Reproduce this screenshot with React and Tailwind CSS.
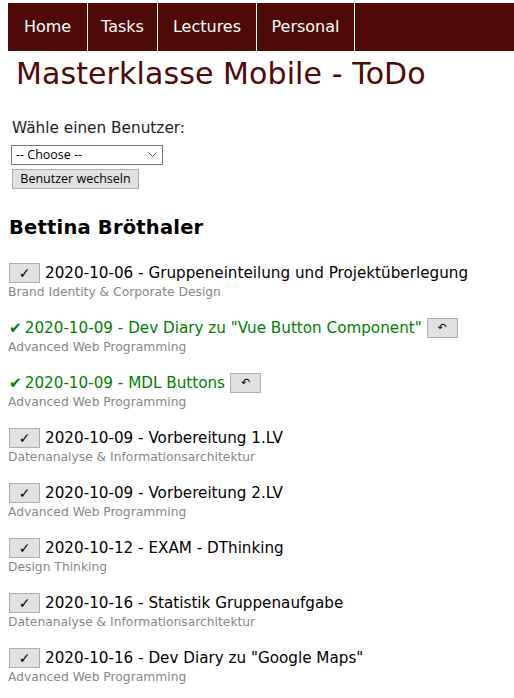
import React from "react";

const items = [
  { date: "2020-10-06", title: "Gruppeneinteilung und Projektüberlegung", course: "Brand Identity & Corporate Design", done: false },
  { date: "2020-10-09", title: 'Dev Diary zu "Vue Button Component"', course: "Advanced Web Programming", done: true },
  { date: "2020-10-09", title: "MDL Buttons", course: "Advanced Web Programming", done: true },
  { date: "2020-10-09", title: "Vorbereitung 1.LV", course: "Datenanalyse & Informationsarchitektur", done: false },
  { date: "2020-10-09", title: "Vorbereitung 2.LV", course: "Advanced Web Programming", done: false },
  { date: "2020-10-12", title: "EXAM - DThinking", course: "Design Thinking", done: false },
  { date: "2020-10-16", title: "Statistik Gruppenaufgabe", course: "Datenanalyse & Informationsarchitektur", done: false },
  { date: "2020-10-16", title: 'Dev Diary zu "Google Maps"', course: "Advanced Web Programming", done: false },
];

const font = { fontFamily: '"DejaVu Sans", sans-serif' };
const ui = { fontFamily: '"Open Sans", "Liberation Sans", sans-serif' };

export default function App() {
  return (
    <div className="bg-white min-h-[698px] pt-[3px] pl-[8px]" style={font}>
      <nav className="flex h-[48px] bg-[#4f0a07] text-white text-[16px]">
        {["Home", "Tasks", "Lectures", "Personal"].map((n, i) => (
          <div key={n} className={"flex items-center justify-center border-r border-white " + ["w-[80px]", "w-[70px]", "w-[99px]", "w-[98px]"][i]}>
            {n}
          </div>
        ))}
        <div className="flex-1" />
      </nav>
      <h1 className="text-[30px] leading-[40px] text-[#4f0a07] pl-[8px] mt-[3px] tracking-[0.1px]">Masterklasse Mobile - ToDo</h1>
      <div className="mt-[24px] pl-[4px] text-[15.3px] leading-[20px] text-[#222]">Wähle einen Benutzer:</div>
      <div className="mt-[7px] pl-[3px]">
        <div className="w-[152px] h-[20px] border border-[#767676] flex items-center justify-between pl-[4px] pr-[5px] text-[12.5px] text-black" style={ui}>
          <span>-- Choose --</span>
          <svg width="9" height="6" viewBox="0 0 9 6"><path d="M0.5 0.5 L4.5 4.5 L8.5 0.5" fill="none" stroke="#555" strokeWidth="1" /></svg>
        </div>
      </div>
      <div className="mt-[4px] pl-[4px]">
        <div className="w-[127px] h-[20px] bg-[#e1e1e1] border border-[#adadad] flex items-center justify-center text-[12.5px] text-black" style={ui}>
          Benutzer wechseln
        </div>
      </div>
      <h2 className="mt-[25px] pl-[1px] text-[19.5px] leading-[28px] font-bold text-black tracking-[0.2px]">Bettina Bröthaler</h2>
      <div className="mt-[20px] pl-[1px]">
        {items.map((it, i) => (
          <div key={i} className="mb-[17px]">
            <div className="h-[22px] flex items-center text-[15.2px]">
              {it.done ? (
                <>
                  <span className="text-[#008000] font-bold mr-[3px]">✔</span>
                  <span className="text-[#008000]">{it.date} - {it.title}</span>
                  <span className="ml-[5px] w-[31px] h-[20px] bg-[#e1e1e1] border border-[#adadad] flex items-center justify-center text-[11px] text-black">↶</span>
                </>
              ) : (
                <>
                  <span className="w-[31px] h-[20px] bg-[#e1e1e1] border border-[#adadad] flex items-center justify-center text-[14px] font-bold text-black mr-[5px]">✓</span>
                  <span className="text-black">{it.date} - {it.title}</span>
                </>
              )}
            </div>
            <div className="h-[16px] text-[12.3px] leading-[16px] text-[#888] -ml-[1px]">{it.course}</div>
          </div>
        ))}
      </div>
    </div>
  );
}
